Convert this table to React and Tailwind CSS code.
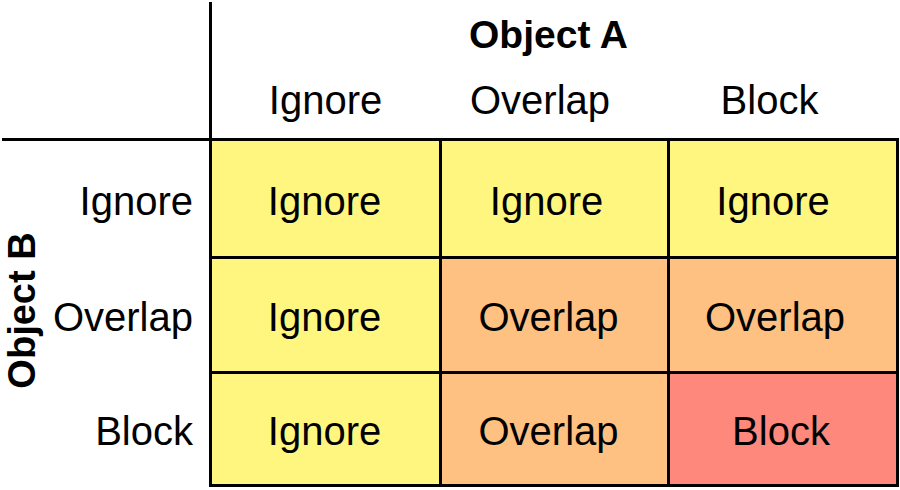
import React from "react";

const Y = "bg-[#fff680]";
const O = "bg-[#ffc182]";
const R = "bg-[#ff887c]";

const rows = [
  {
    label: "Ignore",
    cells: [
      ["Ignore", Y, "pr-[2px]"],
      ["Ignore", Y, "pr-[16px]"],
      ["Ignore", Y, "pr-[20px]"],
    ],
  },
  {
    label: "Overlap",
    cells: [
      ["Ignore", Y, "pr-[2px]"],
      ["Overlap", O, "pr-[12px]"],
      ["Overlap", O, "pr-[16px]"],
    ],
  },
  {
    label: "Block",
    cells: [
      ["Ignore", Y, "pr-[2px]"],
      ["Overlap", O, "pr-[12px]"],
      ["Block", R, "pr-[4px]"],
    ],
  },
];

export default function App() {
  return (
    <div className="w-[900px] h-[490px] bg-white text-black font-['Liberation_Sans',Arial,sans-serif] pt-[2px] overflow-hidden">
      {/* header */}
      <div className="flex h-[136px] w-[899px]">
        <div className="w-[209px] shrink-0" />
        <div className="flex-1 border-l-[3px] border-black flex flex-col">
          <div className="h-[62px] flex items-end justify-center pr-[14px] pb-[10px]">
            <span className="text-[39px] font-bold leading-none">Object A</span>
          </div>
          <div className="grid grid-cols-[227px_228px_229px] flex-1">
            <div className="flex items-center justify-center pb-[2px] text-[40px]">Ignore</div>
            <div className="flex items-center justify-center pb-[2px] pr-[26px] text-[40px]">Overlap</div>
            <div className="flex items-center justify-center pb-[2px] pr-[24px] text-[40px]">Block</div>
          </div>
        </div>
      </div>
      {/* horizontal axis line */}
      <div className="h-[3px] w-[897px] ml-[2px] bg-black" />
      {/* body */}
      <div className="flex w-[899px]">
        <div className="w-[209px] shrink-0 flex">
          <div className="w-[44px] shrink-0 flex items-center justify-center pb-[8px]">
            <span className="-rotate-90 whitespace-nowrap text-[38px] font-bold leading-normal">Object B</span>
          </div>
          <div className="flex-1 grid grid-rows-[115px_112px_110px] gap-y-[3px] pr-[16px]">
            {rows.map((r) => (
              <div key={r.label} className="flex items-center justify-end pt-[4px] text-[40px] whitespace-nowrap">
                {r.label}
              </div>
            ))}
          </div>
        </div>
        <div className="flex-1 border-l-[3px] border-r-[3px] border-b-[3px] border-black bg-black grid grid-cols-[227px_225px_226px] grid-rows-[115px_112px_110px] gap-[3px]">
          {rows.map((r) =>
            r.cells.map(([t, c, p], i) => (
              <div
                key={r.label + i}
                className={`${c} ${p} flex items-center justify-center pt-[4px] text-[40px]`}
              >
                {t}
              </div>
            ))
          )}
        </div>
      </div>
    </div>
  );
}
